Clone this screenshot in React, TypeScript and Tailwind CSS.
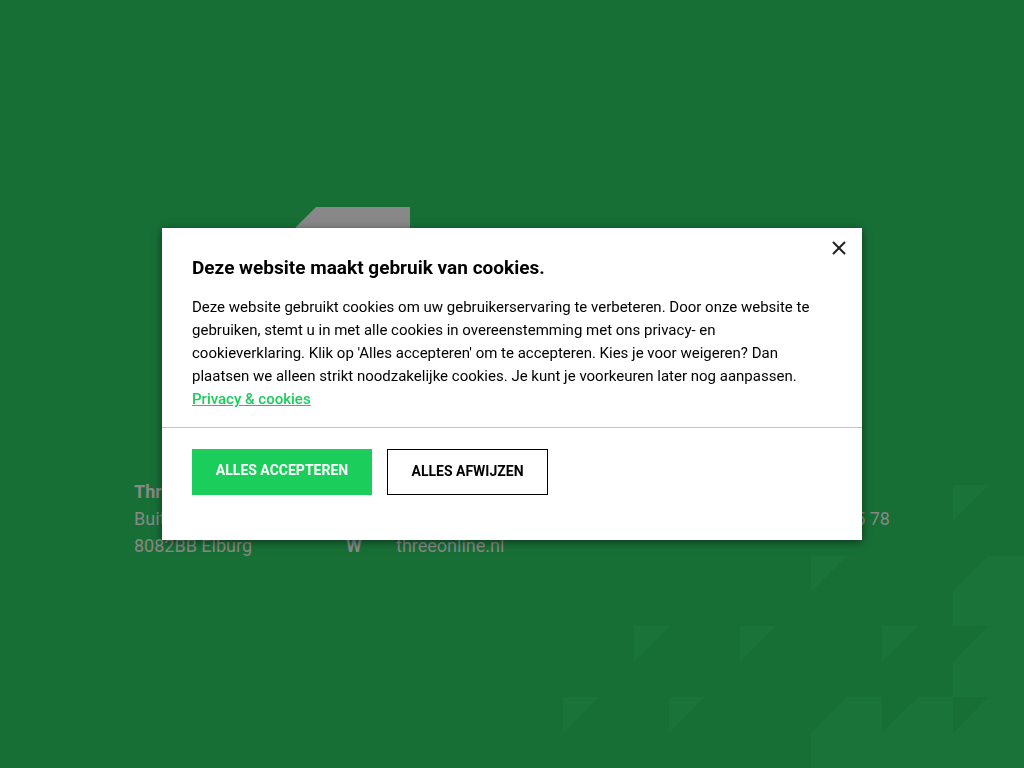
import { X } from "lucide-react";

const triangles = [
  { x: 390, y: 0 },
  { x: 248, y: 71 },
  { x: 71, y: 141 },
  { x: 177, y: 141 },
  { x: 319, y: 141 },
  { x: 0, y: 212 },
  { x: 106, y: 212 }
];

function Pattern() {
  return (
    <svg className="absolute right-0 bottom-0 text-[#1a7339]" width="461" height="283" viewBox="0 0 461 283" fill="currentColor" aria-hidden="true">
      {triangles.map(({ x, y }) => <path key={`${x}-${y}`} d={`M${x} ${y}h36l-36 36z`} />)}
      <path d="M461 71H425L390 106V141H425L390 177V212H425L390 248V212H355L319 248V212H284L248 248V283H461Z" />
    </svg>
  );
}

function ContactPage() {
  return (
    <main className="relative flex min-h-screen flex-col justify-center overflow-hidden bg-[#176f36] px-6 pb-[2px] text-[#888888]">
      <Pattern />
      <div className="mx-auto w-full max-w-[756px]">
        <svg className="mb-[157px] ml-[148px]" width="128" height="114" viewBox="0 0 128 114" fill="currentColor" aria-hidden="true">
          <path d="M34 0H128V114H0V34Z" />
        </svg>
        <div className="flex items-end text-lg leading-[27px] whitespace-nowrap">
          <address className="w-[212px] not-italic">
            <strong className="font-bold">Three Online</strong>
            <br />
            Buit
            <br />
            8082BB Elburg
          </address>
          <p className="flex flex-1">
            <strong className="w-[50px] font-bold">W</strong>
            <a href="#website">threeonline.nl</a>
          </p>
          <p className="pb-[27px]">5 78</p>
        </div>
      </div>
    </main>
  );
}

function CookieDialog() {
  return (
    <div className="fixed inset-0 flex items-center justify-center p-4">
      <section
        role="dialog"
        aria-labelledby="cookie-title"
        className="relative w-full max-w-[700px] bg-white text-black shadow-[0_2px_8px_rgba(0,0,0,0.5)]"
      >
        <button type="button" aria-label="Sluiten" className="absolute top-[9px] right-3 text-[#222222]">
          <X size={22} strokeWidth={2.2} />
        </button>
        <div className="border-b border-[#c4c4c4] px-[30px] pt-7 pb-4">
          <h1 id="cookie-title" className="text-[19px] leading-6 font-bold">Deze website maakt gebruik van cookies.</h1>
          <p className="mt-4 text-[15px] leading-[23px]">
            Deze website gebruikt cookies om uw gebruikerservaring te verbeteren. Door onze website te
            gebruiken, stemt u in met alle cookies in overeenstemming met ons privacy- en
            <br />
            cookieverklaring. Klik op 'Alles accepteren' om te accepteren. Kies je voor weigeren? Dan
            <br />
            plaatsen we alleen strikt noodzakelijke cookies. Je kunt je voorkeuren later nog aanpassen.
            <br />
            <a href="#privacy" className="font-medium text-[#1bcd5b] underline">Privacy &amp; cookies</a>
          </p>
        </div>
        <div className="flex flex-wrap gap-[15px] px-[30px] pt-[21px] pb-[45px] text-sm font-bold">
          <button type="button" className="h-[46px] w-[180px] bg-[#1bcd5b] pb-1 text-white uppercase">Alles accepteren</button>
          <button type="button" className="h-[46px] w-[161px] border border-black pb-[2px] uppercase">Alles afwijzen</button>
        </div>
      </section>
    </div>
  );
}

export default function App() {
  return (
    <div className="font-['Roboto',sans-serif]">
      <ContactPage />
      <CookieDialog />
    </div>
  );
}
